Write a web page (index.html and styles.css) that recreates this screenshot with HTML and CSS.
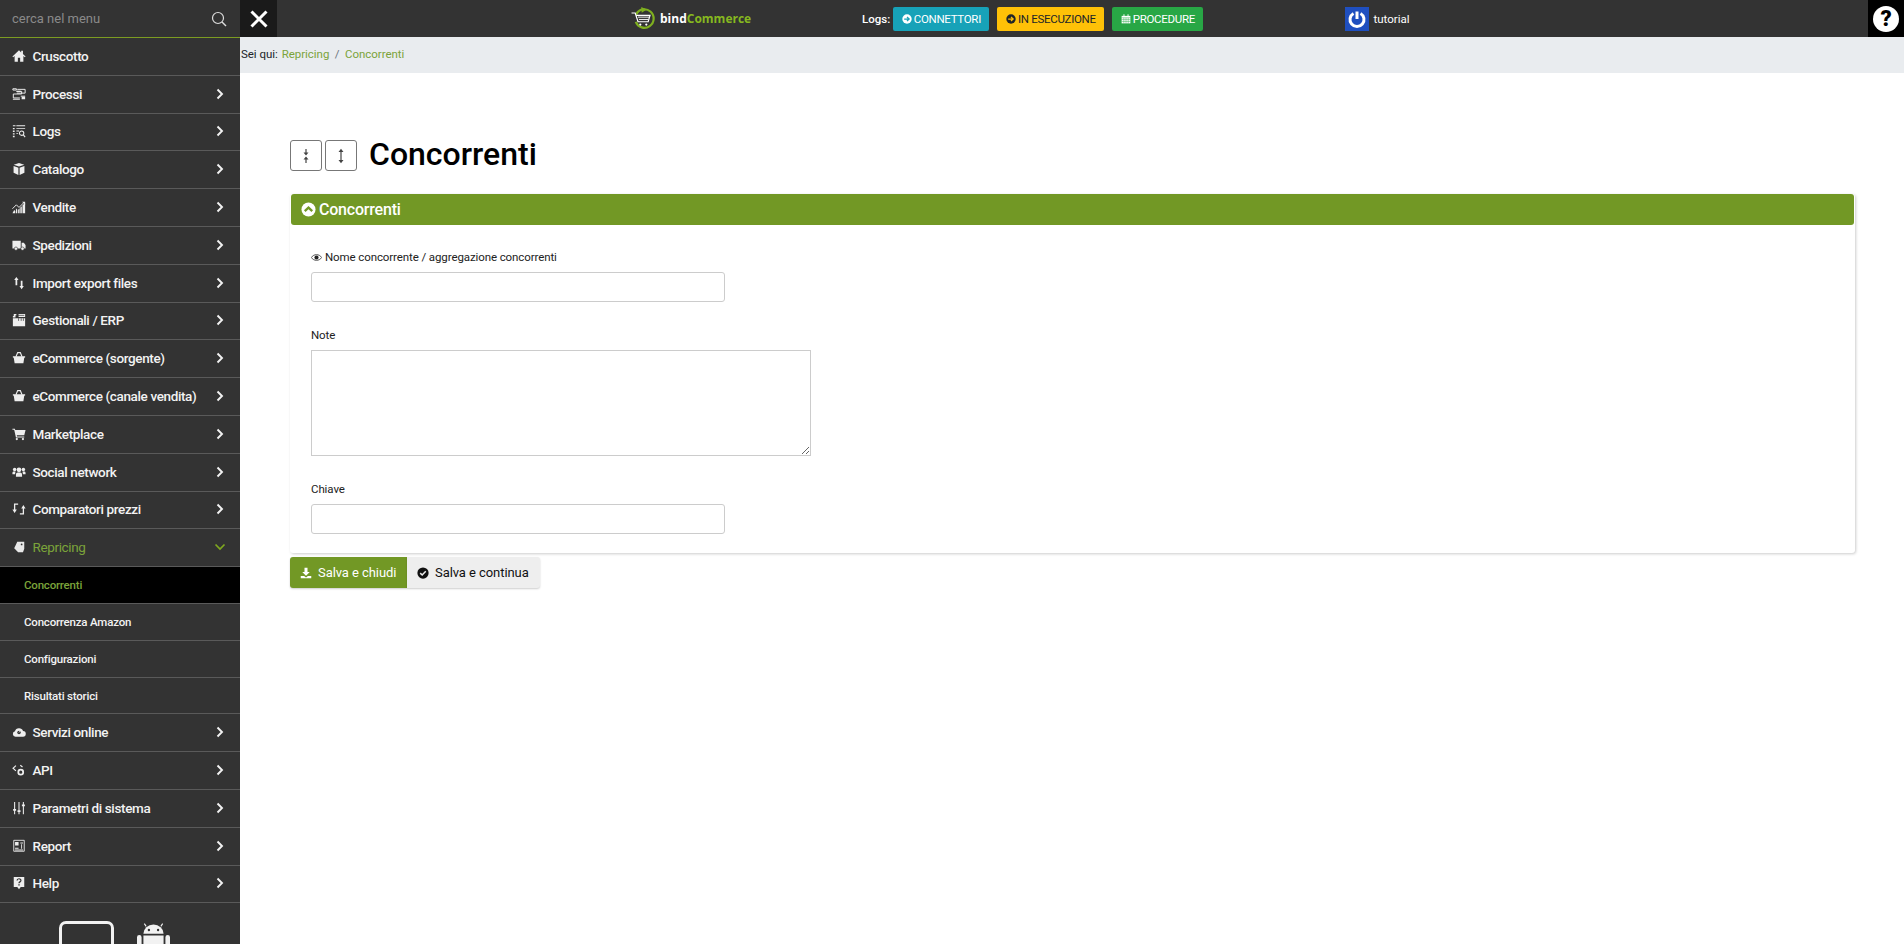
FILE: index.html
```html
<!DOCTYPE html>
<html lang="it">

<head>
    <meta charset="utf-8">
    <title>Concorrenti</title>
    <link rel="stylesheet" href="styles.css">
</head>

<body>
    <svg class="sprite" xmlns="http://www.w3.org/2000/svg">
        <symbol id="i-chevron" viewBox="0 0 8 12"><path d="M1.5 1.5 6 6l-4.500 4.500" fill="none" stroke="currentColor" stroke-width="1.900"/></symbol>
        <symbol id="i-basket" viewBox="0 0 16 16"><path d="M4.500 6.500 6.500 1.800h3l2 4.700" fill="none" stroke="currentColor" stroke-width="1.300"/><path d="M1 6h14v1.500l-1 .3-1 6.200H3L2 7.800l-1-.3z" fill="currentColor"/></symbol>
    </svg>

    <div class="app">
        <aside class="sidebar">
            <div class="menu-search">
                <input type="text" placeholder="cerca nel menu">
                <svg class="search-icon" viewBox="0 0 16 16"><circle cx="7" cy="7" r="5.500" fill="none" stroke="currentColor" stroke-width="1.200"/><path d="m11 11 4 4" stroke="currentColor" stroke-width="1.400"/></svg>
            </div>
            <ul class="menu">
                <li class="menu-item">
                    <svg class="menu-icon" viewBox="0 0 16 16"><path d="M8 1.500 .500 8.500l.800.900L3 8v6.500h3.700V10h2.600v4.500H13V8l1.700 1.400.8-.900L12.500 5.700V2h-2v1.900z" fill="currentColor"/></svg>
                    <span class="menu-label">Cruscotto</span>
                </li>
                <li class="menu-item">
                    <svg class="menu-icon" viewBox="0 0 16 16"><path d="M1 2h4v1.500H1zM6 2.700h9V7H5.500M5.500 5H11v3H1.500v4.500H9M10 10.500h5M1 14h8" fill="none" stroke="currentColor" stroke-width="1.100"/><path d="M11 11h4v3h-4zM5 4.200h5v1.600H5z" fill="currentColor"/></svg>
                    <span class="menu-label">Processi</span>
                    <svg class="chevron"><use href="#i-chevron"/></svg>
                </li>
                <li class="menu-item">
                    <svg class="menu-icon" viewBox="0 0 16 16"><path d="M5 1.500h10v1H5zM1 1.500h3v1H1zM1 4.500h2v1.500H1zM1 7.500h2V9H1zM1 10.500h2V12H1zM1 13.500h2V15H1zM5 4.500h10v1H5zM5 7.500h3v1H5zM5 10.500h2v1H5z" fill="currentColor"/><circle cx="11" cy="10.500" r="2.500" fill="none" stroke="currentColor" stroke-width="1.200"/><path d="m13 12.500 2 2.500" stroke="currentColor" stroke-width="1.300"/></svg>
                    <span class="menu-label">Logs</span>
                    <svg class="chevron"><use href="#i-chevron"/></svg>
                </li>
                <li class="menu-item">
                    <svg class="menu-icon" viewBox="0 0 16 16"><path d="M8 1 14 3 8 5.200 2 3zM1.800 4.500l5.500 2v8.300l-5.500-2.500zM14.200 4.500l-5.500 2v8.300l5.500-2.500z" fill="currentColor"/></svg>
                    <span class="menu-label">Catalogo</span>
                    <svg class="chevron"><use href="#i-chevron"/></svg>
                </li>
                <li class="menu-item">
                    <svg class="menu-icon" viewBox="0 0 16 16"><path d="M.500 15 2.500 11.500l1.200 1V15zM4.500 15V9.500L6 11v4zM7 15v-4l1.700-1.500V15zM9.500 15V8.500L11.200 7v8zM12 15V6l3-2.500V15z" fill="currentColor"/><path d="m.500 10 4.500-4.500 3 3L14 2.500" fill="none" stroke="currentColor" stroke-width="1.100"/><path d="M11.500 2H15v3.500z" fill="currentColor"/></svg>
                    <span class="menu-label">Vendite</span>
                    <svg class="chevron"><use href="#i-chevron"/></svg>
                </li>
                <li class="menu-item">
                    <svg class="menu-icon" viewBox="0 0 16 16"><path d="M.500 3h9.500v9H.500zM11 5.500h2.500L15.500 8v4H11z" fill="currentColor"/><circle cx="4.500" cy="12.200" r="1.900" fill="currentColor" stroke="#333" stroke-width=".7"/><circle cx="12" cy="12.200" r="1.900" fill="currentColor" stroke="#333" stroke-width=".7"/></svg>
                    <span class="menu-label">Spedizioni</span>
                    <svg class="chevron"><use href="#i-chevron"/></svg>
                </li>
                <li class="menu-item">
                    <svg class="menu-icon" viewBox="0 0 16 16"><path d="M5 1 7.500 4.500H6v6H4v-6H2.500zM11 15l-2.500-3.500H10v-6h2v6h1.500z" fill="currentColor"/></svg>
                    <span class="menu-label">Import export files</span>
                    <svg class="chevron"><use href="#i-chevron"/></svg>
                </li>
                <li class="menu-item">
                    <svg class="menu-icon" viewBox="0 0 16 16"><path d="M2 1h3v1.500H4V5H1V3.500h1zM7.500 1h7.500v3.500H7.500zM1 6h14v9H1z" fill="currentColor"/><path d="M7.500 6v3M10.500 6v3M13 6v3M7 2.700h7" stroke="#333" stroke-width=".8"/></svg>
                    <span class="menu-label">Gestionali / ERP</span>
                    <svg class="chevron"><use href="#i-chevron"/></svg>
                </li>
                <li class="menu-item">
                    <svg class="menu-icon"><use href="#i-basket"/></svg>
                    <span class="menu-label">eCommerce (sorgente)</span>
                    <svg class="chevron"><use href="#i-chevron"/></svg>
                </li>
                <li class="menu-item">
                    <svg class="menu-icon"><use href="#i-basket"/></svg>
                    <span class="menu-label">eCommerce (canale vendita)</span>
                    <svg class="chevron"><use href="#i-chevron"/></svg>
                </li>
                <li class="menu-item">
                    <svg class="menu-icon" viewBox="0 0 16 16"><path d="M.500 2h2.800l.4 1.500H15.500l-1.500 6H5.500l.3 1.300H14V12H4.500L2.500 3.200H.500z" fill="currentColor"/><circle cx="5.500" cy="13.800" r="1.300" fill="currentColor"/><circle cx="12.500" cy="13.800" r="1.300" fill="currentColor"/></svg>
                    <span class="menu-label">Marketplace</span>
                    <svg class="chevron"><use href="#i-chevron"/></svg>
                </li>
                <li class="menu-item">
                    <svg class="menu-icon" viewBox="0 0 16 16"><circle cx="8" cy="5.500" r="2.700" fill="currentColor"/><circle cx="3" cy="5" r="2" fill="currentColor"/><circle cx="13" cy="5" r="2" fill="currentColor"/><path d="M4.500 13.500v-2.500c0-1.500 1-2.500 2-2.500h3c1 0 2 1 2 2.500v2.500zM.500 10.500V9C.500 8 1.500 7.500 2 7.500h2l-.500 3zM15.500 10.500V9c0-1-1-1.500-1.500-1.500h-2l.500 3z" fill="currentColor"/></svg>
                    <span class="menu-label">Social network</span>
                    <svg class="chevron"><use href="#i-chevron"/></svg>
                </li>
                <li class="menu-item">
                    <svg class="menu-icon" viewBox="0 0 16 16"><path d="M3 10V2.500h4M13 6v7.500H9" fill="none" stroke="currentColor" stroke-width="1.500"/><path d="M0.500 8.500h5L3 12.500zM10.500 7.500h5L13 3.500z" fill="currentColor"/></svg>
                    <span class="menu-label">Comparatori prezzi</span>
                    <svg class="chevron"><use href="#i-chevron"/></svg>
                </li>
                <li class="menu-item open">
                    <svg class="menu-icon repricing-icon" viewBox="0 0 16 16"><path d="M6 2h8v8l-1.500 4H7L2.500 9.500z" fill="currentColor"/><circle cx="11" cy="5" r="1" fill="#333"/></svg>
                    <span class="menu-label">Repricing</span>
                    <svg class="chevron down" viewBox="0 0 12 8"><path d="M1.500 1.500 6 6l4.500-4.500" fill="none" stroke="currentColor" stroke-width="1.700"/></svg>
                </li>
                <li class="sub-item active">Concorrenti</li>
                <li class="sub-item">Concorrenza Amazon</li>
                <li class="sub-item">Configurazioni</li>
                <li class="sub-item">Risultati storici</li>
                <li class="menu-item">
                    <svg class="menu-icon" viewBox="0 0 16 16"><path d="M4 13.500a3.200 3.200 0 0 1-.6-6.300 4.800 4.800 0 0 1 9.200-.3 3.300 3.300 0 0 1-.3 6.600z" fill="currentColor"/><circle cx="8" cy="8.500" r="2" fill="#333"/><path d="m8 8.500 1-1.500" stroke="currentColor"/></svg>
                    <span class="menu-label">Servizi online</span>
                    <svg class="chevron"><use href="#i-chevron"/></svg>
                </li>
                <li class="menu-item">
                    <svg class="menu-icon" viewBox="0 0 16 16"><path d="M4.500 3 1.200 6l3.300 3M9.500 2.500l2.500 2" fill="none" stroke="currentColor" stroke-width="1.300"/><circle cx="10" cy="10.500" r="2.800" fill="none" stroke="currentColor" stroke-width="2"/></svg>
                    <span class="menu-label">API</span>
                    <svg class="chevron"><use href="#i-chevron"/></svg>
                </li>
                <li class="menu-item">
                    <svg class="menu-icon" viewBox="0 0 16 16"><path d="M3 1v14M8 1v14M13 1v14" stroke="currentColor" stroke-width="1.200"/><path d="M1.300 9h3.400v2H1.300zM6.300 10.500h3.400v2H6.300zM11.300 4h3.400v2h-3.400z" fill="currentColor"/></svg>
                    <span class="menu-label">Parametri di sistema</span>
                    <svg class="chevron"><use href="#i-chevron"/></svg>
                </li>
                <li class="menu-item">
                    <svg class="menu-icon" viewBox="0 0 16 16"><path d="M2 1.500h12v12.500H2z" fill="none" stroke="currentColor" stroke-width="1"/><path d="M3.500 3.500h4v4h-4zM9.500 4h3v1h-3zM10.500 6h1v5h-1zM3.500 10h4v1h-4zM3.500 12h9v1h-9z" fill="currentColor"/></svg>
                    <span class="menu-label">Report</span>
                    <svg class="chevron"><use href="#i-chevron"/></svg>
                </li>
                <li class="menu-item">
                    <svg class="menu-icon" viewBox="0 0 16 16"><path d="M2 1h12v11.500H10l-2 2.500-2-2.500H2z" fill="currentColor"/><path d="M5.800 5.200C5.800 2.500 10.200 2.500 10.200 5c0 1.800-2.200 1.600-2.200 3.200" fill="none" stroke="#333" stroke-width="1.400"/><path d="M7.200 9.300h1.600v1.500H7.200z" fill="#333"/></svg>
                    <span class="menu-label">Help</span>
                    <svg class="chevron"><use href="#i-chevron"/></svg>
                </li>
            </ul>
            <div class="app-links">
                <div class="tablet-icon"></div>
                <svg class="android-icon" viewBox="0 0 36 40"><path d="M7 12a11 10 0 0 1 22 0z" fill="currentColor"/><path d="m10 4-2-3M26 4l2-3" stroke="currentColor" stroke-width="1.200"/><circle cx="13" cy="8" r="1.300" fill="#333"/><circle cx="23" cy="8" r="1.300" fill="#333"/><path d="M7 14h22v18H7zM0 16a2.500 2.500 0 0 1 5 0v12H0zM31 16a2.500 2.500 0 0 1 5 0v12h-5z" fill="currentColor"/></svg>
            </div>
        </aside>

        <div class="main">
            <header class="topbar">
                <button class="close-btn">
                    <svg viewBox="0 0 20 20"><path d="m2.500 2.500 15 15M17.500 2.500l-15 15" stroke="currentColor" stroke-width="3"/></svg>
                </button>
                <div class="logo">
                    <svg class="logo-mark" viewBox="0 0 28 26"><path d="M5.500 8a10 10 0 1 1-.4 8" fill="none" stroke="#7fb01f" stroke-width="2.400"/><path d="m11 0 6 2.800-5.500 3.400z" fill="#7fb01f"/><path d="M.500 6.500h4l3 9.500h11l2-7H6" fill="none" stroke="#fff" stroke-width="1.300"/><path d="M7.500 11h12M8.500 13.500h10" stroke="#fff" stroke-width="1"/><circle cx="10" cy="19" r="1.200" fill="#fff"/><circle cx="16.500" cy="19" r="1.200" fill="#fff"/></svg>
                    <span class="logo-bind">bind</span><span class="logo-commerce">Commerce</span>
                </div>
                <div class="logs">
                    <span class="logs-title">Logs:</span>
                    <a class="log-btn log-info">
                        <svg viewBox="0 0 16 16"><circle cx="8" cy="8" r="7.500" fill="currentColor"/><path d="M3.500 8H11M8 4.800 11.500 8 8 11.200" fill="none" stroke="#17a2b8" stroke-width="2"/></svg>
                        CONNETTORI
                    </a>
                    <a class="log-btn log-warning">
                        <svg viewBox="0 0 16 16"><circle cx="8" cy="8" r="7.500" fill="currentColor"/><path d="M3.500 8H11M8 4.800 11.500 8 8 11.200" fill="none" stroke="#ffc107" stroke-width="2"/></svg>
                        IN ESECUZIONE
                    </a>
                    <a class="log-btn log-success">
                        <svg viewBox="0 0 16 16"><path d="M1 3h14v12H1z" fill="currentColor"/><path d="M4 .500h1.500V3H4zM10.500 .500H12V3h-1.500z" fill="currentColor"/><path d="M1 6h14M4.500 6v9M8 6v9M11.500 6v9M1 9h14M1 12h14" stroke="#28a745" stroke-width=".7"/></svg>
                        PROCEDURE
                    </a>
                </div>
                <div class="user">
                    <span class="user-icon">
                        <svg viewBox="0 0 24 24"><path d="M8.500 6.500a7 7 0 1 0 7 0" fill="none" stroke="#fff" stroke-width="3"/><path d="M12 4.500v7.500" stroke="#fff" stroke-width="3"/></svg>
                    </span>
                    <span>tutorial</span>
                </div>
                <div class="help-box">
                    <span class="help-circle">?</span>
                </div>
            </header>

            <nav class="breadcrumb">
                <span class="crumb-title">Sei qui:</span>
                <a>Repricing</a>
                <span class="crumb-sep">/</span>
                <a>Concorrenti</a>
            </nav>

            <main class="content">
                <div class="title-row">
                    <button class="tool-btn">
                        <svg viewBox="0 0 10 16"><path d="M5 1v5M5 10v5" stroke="#444" stroke-width="1.200"/><path d="M2.500 4.500h5L5 7.500zM2.500 11.500h5L5 8.500z" fill="#444"/></svg>
                    </button>
                    <button class="tool-btn">
                        <svg viewBox="0 0 10 16"><path d="M5 3v10" stroke="#444" stroke-width="1.200"/><path d="M2.500 4h5L5 .800zM2.500 12h5L5 15.200z" fill="#444"/></svg>
                    </button>
                    <h1>Concorrenti</h1>
                </div>

                <section class="card">
                    <div class="card-header">
                        <svg viewBox="0 0 16 16"><circle cx="8" cy="8" r="7.500" fill="#fff"/><path d="M4 9.800 8 6l4 3.800" fill="none" stroke="#729825" stroke-width="2.400"/></svg>
                        Concorrenti
                    </div>
                    <div class="card-body">
                        <div class="form-group">
                            <label>
                                <svg class="eye" viewBox="0 0 16 12"><path d="M.500 6C4 .500 12 .500 15.500 6 12 11.500 4 11.500 .500 6z" fill="none" stroke="#222" stroke-width="1.100"/><circle cx="8" cy="6" r="3" fill="#222"/></svg>
                                Nome concorrente / aggregazione concorrenti
                            </label>
                            <input class="field" type="text">
                        </div>
                        <div class="form-group">
                            <label>Note</label>
                            <textarea class="field field-area"></textarea>
                        </div>
                        <div class="form-group last">
                            <label>Chiave</label>
                            <input class="field" type="text">
                        </div>
                    </div>
                </section>

                <div class="form-actions">
                    <button class="btn btn-primary">
                        <svg viewBox="0 0 16 16"><path d="M6 1h4v5.500h3L8 11.500 3 6.500h3zM1 12h4.500L8 14l2.500-2H15v3H1z" fill="currentColor"/></svg>
                        Salva e chiudi
                    </button>
                    <button class="btn btn-light">
                        <svg viewBox="0 0 16 16"><circle cx="8" cy="8" r="7.500" fill="currentColor"/><path d="m4.300 8.200 2.600 2.500 4.800-5" fill="none" stroke="#eee" stroke-width="2"/></svg>
                        Salva e continua
                    </button>
                </div>
            </main>
        </div>
    </div>
</body>

</html>
```

FILE: styles.css
```css
* {
    padding: 0;
    margin: 0;
    box-sizing: border-box;
}

html,
body {
    height: 100%;
    overflow: hidden;
}

body {
    font-family: Roboto, "Liberation Sans", sans-serif;
    font-size: 12px;
    color: #212529;
    background-color: #fff;
}

svg {
    display: block;
}

.sprite {
    display: none;
}

.app {
    display: flex;
    height: 100vh;
}

/* sidebar */

.sidebar {
    flex: 0 0 240px;
    background-color: #333;
    color: #f2f2f2;
    overflow: hidden;
}

.menu-search {
    display: flex;
    align-items: center;
    height: 38px;
    padding: 0 12px;
    border-bottom: 1px solid #7c9c22;
}

.menu-search input {
    flex: 1;
    min-width: 0;
    border: none;
    background: none;
    outline: none;
    color: #ddd;
    font-family: inherit;
    font-size: 13px;
}

.menu-search input::placeholder {
    color: #8a8a8a;
    opacity: 1;
}

.search-icon {
    width: 16px;
    height: 16px;
    color: #ddd;
    margin-right: 1px;
}

.menu {
    list-style: none;
}

.menu-item {
    display: flex;
    align-items: center;
    height: 37.8px;
    padding: 0 16px 1px 12px;
    border-bottom: 1px solid #5a5a5a;
    font-size: 13.5px;
    font-weight: 500;
    letter-spacing: -0.37px;
}

.menu-icon {
    flex: none;
    width: 14px;
    height: 14px;
    margin-right: 6.5px;
    color: #eee;
}

.menu-label {
    flex: 1;
    white-space: nowrap;
}

.chevron {
    flex: none;
    width: 8px;
    height: 12px;
    color: #f2f2f2;
}

.menu-item.open {
    color: #7ba33a;
    font-weight: 400;
}

.repricing-icon {
    color: #e8e8e8;
}

.chevron.down {
    width: 12px;
    height: 8px;
    margin-right: -2px;
    color: #7fa81f;
}

.sub-item {
    height: 36.8px;
    line-height: 36px;
    padding-left: 24px;
    border-bottom: 1px solid #5a5a5a;
    font-size: 11.5px;
    font-weight: 500;
    letter-spacing: -0.2px;
}

.sub-item.active {
    background-color: #000;
    color: #7ba33a;
}

.app-links {
    display: flex;
    gap: 23px;
    padding: 18px 0 0 59px;
}

.tablet-icon {
    width: 55px;
    height: 60px;
    border: 3px solid #f2f2f2;
    border-radius: 7px;
}

.android-icon {
    width: 33px;
    height: 40px;
    color: #f2f2f2;
}

/* top bar */

.main {
    flex: 1;
    min-width: 0;
    display: flex;
    flex-direction: column;
}

.topbar {
    flex: none;
    display: flex;
    align-items: center;
    height: 37px;
    background-color: #333;
    color: #fff;
}

.close-btn {
    width: 37px;
    height: 37px;
    display: flex;
    align-items: center;
    justify-content: center;
    border: none;
    background-color: #1a1a1a;
    color: #fff;
}

.close-btn svg {
    width: 20px;
    height: 20px;
}

.logo {
    display: flex;
    align-items: center;
    margin-left: 354px;
    font-family: "Open Sans", sans-serif;
    font-size: 12px;
    font-weight: 700;
    width: 231px;
}

.logo-mark {
    width: 26px;
    height: 24px;
    margin-right: 3px;
}

.logo-commerce {
    color: #86b81f;
}

.logs {
    display: flex;
    align-items: center;
}

.logs-title {
    font-weight: 500;
    font-size: 11.5px;
    margin-right: 3px;
}

.log-btn {
    display: flex;
    align-items: center;
    gap: 2px;
    height: 24px;
    padding: 0 8.5px;
    border-radius: 2px;
    margin-right: 8px;
    font-size: 11.5px;
    font-weight: 400;
    letter-spacing: -0.3px;
}

.log-btn svg {
    width: 10px;
    height: 10px;
}

.log-info {
    background-color: #17a2b8;
}

.log-warning {
    background-color: #ffc107;
    color: #212529;
}

.log-success {
    background-color: #28a745;
}

.user {
    display: flex;
    align-items: center;
    gap: 4px;
    margin-left: 134px;
    font-size: 11.5px;
}

.user-icon {
    width: 24px;
    height: 24px;
    background-color: #1f4fbf;
    display: block;
}

.help-box {
    margin-left: auto;
    width: 36px;
    height: 37px;
    display: flex;
    align-items: center;
    justify-content: center;
    background-color: #000;
}

.help-circle {
    width: 26px;
    height: 26px;
    border-radius: 50%;
    background-color: #fff;
    color: #000;
    text-align: center;
    font-size: 22px;
    font-weight: 900;
    line-height: 26px;
}

/* breadcrumb */

.breadcrumb {
    flex: none;
    display: flex;
    align-items: center;
    height: 36px;
    padding: 0 0 3px 1px;
    background-color: #e9ecef;
    font-size: 11.5px;
    letter-spacing: -0.04px;
}

.crumb-title {
    margin-right: 4px;
}

.breadcrumb a {
    color: #7ba33a;
}

.crumb-sep {
    margin: 0 5.5px;
    color: #6c757d;
}

/* content */

.content {
    flex: 1;
    padding: 67px 49px 0 50px;
}

.title-row {
    display: flex;
    align-items: center;
    gap: 3px;
    height: 31px;
    margin-bottom: 23px;
}

.tool-btn {
    width: 32px;
    height: 31px;
    display: flex;
    align-items: center;
    justify-content: center;
    border: 1px solid #777;
    border-radius: 3px;
    background-color: #fff;
}

.tool-btn svg {
    width: 10px;
    height: 16px;
}

h1 {
    margin-left: 9px;
    padding-bottom: 3px;
    font-size: 32px;
    font-weight: 500;
    color: #000;
    line-height: 30px;
}

.card {
    border-radius: 3px;
    background-color: #fff;
    box-shadow: 1px 1px 3px rgba(0, 0, 0, 0.2);
}

.card-header {
    display: flex;
    align-items: center;
    gap: 3px;
    height: 31px;
    margin: 0 1px;
    padding-left: 10px;
    border-radius: 3px;
    background-color: #729825;
    color: #fff;
    font-size: 16px;
    font-weight: 500;
    letter-spacing: -0.2px;
}

.card-header svg {
    width: 15px;
    height: 15px;
}

.card-body {
    padding: 24px 21px 19px;
}

.form-group {
    margin-bottom: 25px;
}

.form-group.last {
    margin-bottom: 0;
}

label {
    display: flex;
    align-items: center;
    gap: 3px;
    height: 16px;
    margin-bottom: 7px;
    font-size: 11.5px;
    font-weight: 400;
    letter-spacing: -0.1px;
    color: #222;
}

.eye {
    width: 11px;
    height: 9px;
}

.field {
    display: block;
    width: 414px;
    height: 30px;
    padding: 4px 8px;
    border: 1px solid #ccc;
    border-radius: 3px;
    background-color: #fff;
    font-family: inherit;
    outline: none;
}

.field-area {
    width: 500px;
    height: 106px;
    border-radius: 0;
}

.form-actions {
    display: flex;
    margin-top: 4px;
}

.btn {
    display: flex;
    align-items: center;
    gap: 6px;
    height: 31px;
    border: none;
    font-family: inherit;
    font-size: 13px;
    letter-spacing: -0.07px;
    box-shadow: 0 1px 2px rgba(0, 0, 0, 0.2);
}

.btn svg {
    width: 12px;
    height: 12px;
}

.btn-primary {
    width: 117px;
    padding-left: 10px;
    border-radius: 3px 0 0 3px;
    background-color: #729825;
    color: #fff;
}

.btn-light {
    width: 133px;
    padding-left: 10px;
    border-radius: 0 3px 3px 0;
    background-color: #eee;
    color: #111;
}
```
